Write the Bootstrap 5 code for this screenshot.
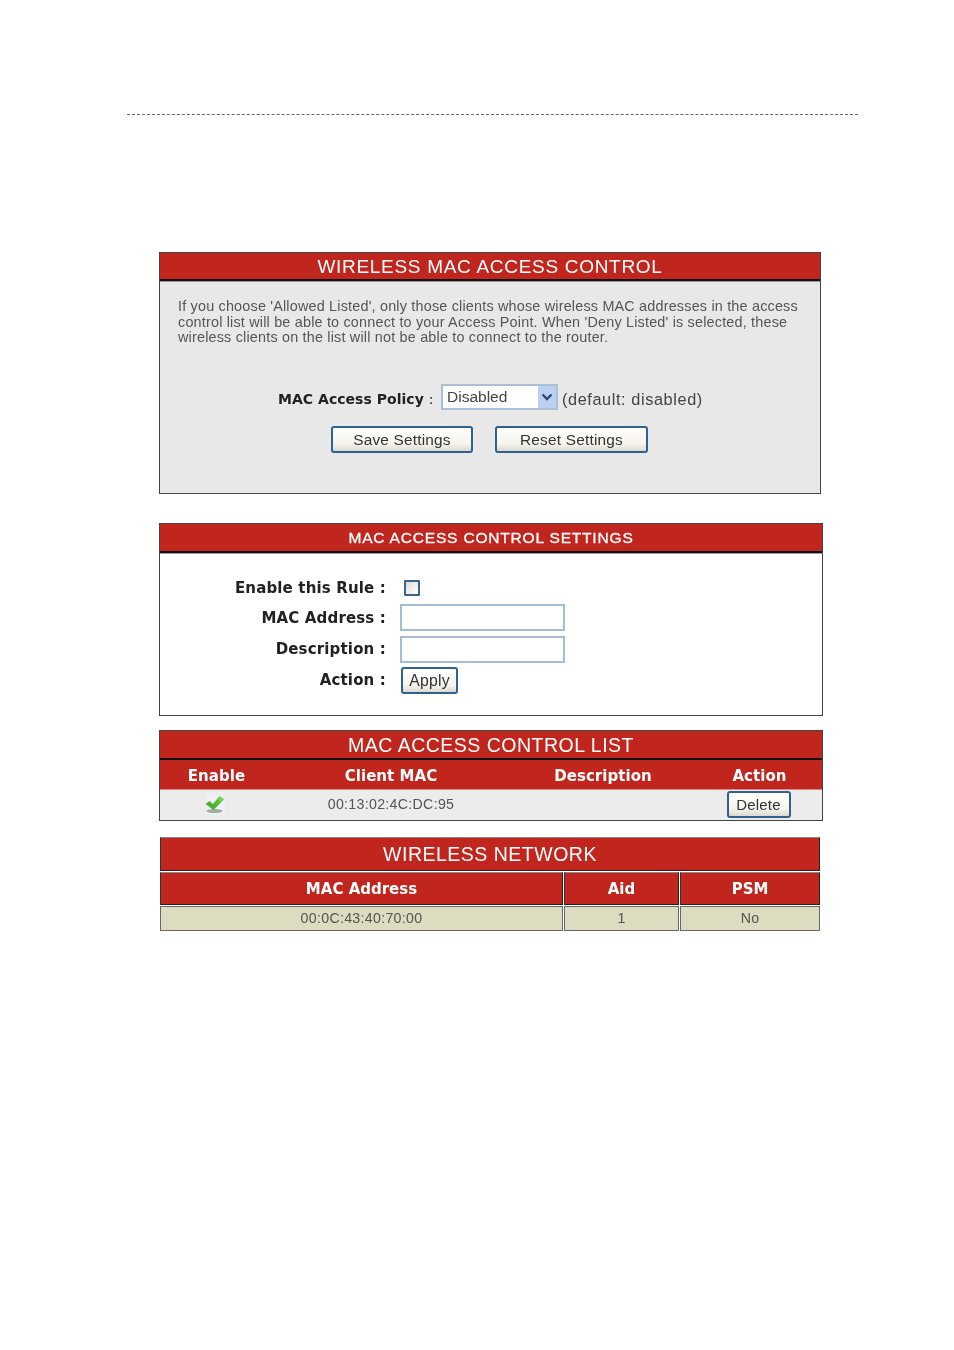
<!DOCTYPE html>
<html lang="en">
<head>
<meta charset="utf-8">
<title>Wireless MAC Access Control</title>
<link rel="stylesheet" href="https://cdn.jsdelivr.net/npm/bootstrap@5.3.0/dist/css/bootstrap.min.css">
<style>
body{background:#fff;font-family:"Liberation Sans",Arial,sans-serif;color:#444;}
.sheet{padding-top:114px;}
.rule{margin-left:127px;width:731px;height:1px;border-top:1px dashed #666;}
.box{margin-left:159px;border:1px solid #444;filter:blur(.3px);}
.box-a{width:662px;height:242px;margin-top:137px;background:#e8e8e8;}
.box-b{width:664px;height:193px;margin-top:29px;background:#fff;}
.box-c{width:664px;height:91px;margin-top:14px;background:#ececec;}
.head{background:#c0261e;color:#fff;text-align:center;border-bottom:2px solid #111;box-shadow:0 1px 0 #999;}
.head-a{height:28px;font-size:19px;line-height:28px;letter-spacing:.7px;}
.head-b{height:29px;font-size:15.5px;line-height:28px;font-weight:400;letter-spacing:.82px;-webkit-text-stroke:.3px #fff;}
.head-c{height:29px;font-size:19.500px;line-height:28px;letter-spacing:.5px;}
.intro{padding:18px 18px 0;font-size:14.4px;line-height:15.7px;color:#555;letter-spacing:.19px;}
.label-bold{font-family:"DejaVu Sans",Verdana,sans-serif;font-weight:700;color:#222;}
.policy{margin-top:38px;padding-left:118px;height:26px;font-size:14.2px;}
.policy .label-bold{font-size:14px;letter-spacing:.03px;width:163px;flex:none;white-space:nowrap;padding-top:5px;}
.pick-wrap{position:relative;width:117px;height:26px;flex:none;}
.pick{appearance:none;width:100%;height:100%;border:2px solid #a9c0d8;background:#fff;font:15.5px/20px "Liberation Sans",Arial,sans-serif;color:#444;padding:0 0 0 4px;border-radius:0;}
.pick-arrow{position:absolute;top:2px;right:2px;width:18px;height:22px;background:#bcd0f2;display:flex;align-items:center;justify-content:center;pointer-events:none;}
.hint{margin-left:4px;padding-top:5px;font-size:16.3px;letter-spacing:.6px;color:#444;white-space:nowrap;}
.btn.press{background:linear-gradient(#fff,#f4f3ec 70%,#dcdad0);border:2px solid #2f6291;border-radius:3px;color:#333;font-size:15.4px;line-height:20px;padding:0;height:27px;letter-spacing:.2px;}
.press-save{width:142px;}
.press-reset{width:153px;margin-left:22px;}
.btn-row{margin-top:16px;padding-left:171px;}
.form-area{padding-top:18px;}
.frow{height:31.3px;}
.flabel{width:226px;text-align:right;font-size:15px;letter-spacing:.16px;flex:none;white-space:nowrap;}
.flabel-first{padding-top:3px;}
.tick-box{appearance:none;width:16px;height:16px;margin-left:18px;margin-top:2px;border:2px solid #3e6488;border-radius:1px;background:linear-gradient(135deg,#dcdcd6,#fff);display:block;}
.field{width:165px;height:27px;margin-left:14px;border:2px solid #a4bcd6;background:#fff;display:block;border-radius:0;}
.btn.press-apply{width:57px;margin-left:15px;font-size:15.8px;}
.grid-c{width:100%;table-layout:fixed;border-collapse:collapse;}
.grid-c th{background:#c0261e;color:#fff;height:29px;font-family:"DejaVu Sans",Verdana,sans-serif;font-size:15px;letter-spacing:.05px;font-weight:700;text-align:center;border-bottom:1px solid #d88;padding:3px 0 0;}
.grid-c td{height:31px;text-align:center;font-size:14.2px;letter-spacing:.3px;color:#555;padding:0;vertical-align:middle;}
.tick-icon{margin-left:45px;}
.btn.press-del{width:64px;height:27px;font-size:15px;margin-left:-2px;display:inline-block;vertical-align:middle;}
.grid-d{margin-left:159px;margin-top:15px;width:661px;border-collapse:separate;border-spacing:1px 1px;table-layout:fixed;filter:blur(.3px);}
.grid-d th,.grid-d td{text-align:center;padding:0;border:1px solid #222;border-top-color:#888;border-left-color:#333;}
.grid-d th{background:#c0261e;color:#fff;}
.grid-d .title{height:34px;font-size:19.5px;font-weight:400;letter-spacing:.5px;padding-top:2px;}
.grid-d .col-h{height:33px;font-family:"DejaVu Sans",Verdana,sans-serif;font-size:15px;font-weight:700;padding-top:2px;}
.grid-d td{height:25px;background:#dddcc0;font-size:14.2px;letter-spacing:.3px;color:#555;border-color:#666;}
</style>
</head>
<body>
<div class="sheet">
  <div class="rule"></div>

  <section class="box box-a">
    <div class="head head-a">WIRELESS MAC ACCESS CONTROL</div>
    <p class="intro mb-0">If you choose 'Allowed Listed', only those clients whose wireless MAC addresses in the access control list will be able to connect to your Access Point. When 'Deny Listed' is selected, these wireless clients on the list will not be able to connect to the router.</p>
    <div class="policy d-flex align-items-center">
      <span class="label-bold">MAC Access Policy <span class="fw-normal">:</span></span>
      <div class="pick-wrap">
        <select class="pick" aria-label="MAC Access Policy"><option>Disabled</option></select>
        <span class="pick-arrow"><svg width="12" height="8" viewBox="0 0 12 8"><path d="M1.5 1.5 6 6l4.500-4.500" fill="none" stroke="#2d4a78" stroke-width="2.400"/></svg></span>
      </div>
      <span class="hint">(default: disabled)</span>
    </div>
    <div class="btn-row d-flex">
      <button type="button" class="btn press press-save">Save Settings</button>
      <button type="button" class="btn press press-reset">Reset Settings</button>
    </div>
  </section>

  <section class="box box-b">
    <div class="head head-b">MAC ACCESS CONTROL SETTINGS</div>
    <div class="form-area">
      <div class="frow d-flex align-items-center"><span class="flabel flabel-first label-bold">Enable this Rule :</span><input class="tick-box" type="checkbox" aria-label="Enable this Rule"></div>
      <div class="frow d-flex align-items-center"><span class="flabel label-bold">MAC Address :</span><input class="field" type="text" aria-label="MAC Address"></div>
      <div class="frow d-flex align-items-center"><span class="flabel label-bold">Description :</span><input class="field" type="text" aria-label="Description"></div>
      <div class="frow d-flex align-items-center"><span class="flabel label-bold">Action :</span><button type="button" class="btn press press-apply">Apply</button></div>
    </div>
  </section>

  <section class="box box-c">
    <div class="head head-c">MAC ACCESS CONTROL LIST</div>
    <table class="grid-c">
      <colgroup><col style="width:113px"><col style="width:236px"><col style="width:188px"><col style="width:125px"></colgroup>
      <thead><tr><th>Enable</th><th>Client MAC</th><th>Description</th><th>Action</th></tr></thead>
      <tbody><tr>
        <td><svg width="20" height="19" viewBox="0 0 20 19" class="d-block tick-icon"><defs><linearGradient id="tickfill" x1="1" y1="0" x2="0" y2="1"><stop offset="0" stop-color="#a5dc8c"/><stop offset=".4" stop-color="#5cbc3a"/><stop offset="1" stop-color="#3fa524"/></linearGradient></defs><rect x="1" y="0" width="19" height="19" fill="#eef2f7"/><ellipse cx="9.500" cy="16" rx="8" ry="2" fill="#a3aca3"/><path d="M.5 9 4.500 6 8 9 14.500 .8 19.500 4 8.500 15Z" fill="url(#tickfill)"/></svg></td>
        <td>00:13:02:4C:DC:95</td>
        <td></td>
        <td><button type="button" class="btn press press-del">Delete</button></td>
      </tr></tbody>
    </table>
  </section>

  <table class="grid-d">
    <colgroup><col style="width:403px"><col style="width:115px"><col style="width:140px"></colgroup>
    <thead>
      <tr><th colspan="3" class="title">WIRELESS NETWORK</th></tr>
      <tr><th class="col-h">MAC Address</th><th class="col-h">Aid</th><th class="col-h">PSM</th></tr>
    </thead>
    <tbody><tr><td>00:0C:43:40:70:00</td><td>1</td><td>No</td></tr></tbody>
  </table>
</div>
<script src="https://cdn.jsdelivr.net/npm/bootstrap@5.3.0/dist/js/bootstrap.bundle.min.js"></script>
</body>
</html>
